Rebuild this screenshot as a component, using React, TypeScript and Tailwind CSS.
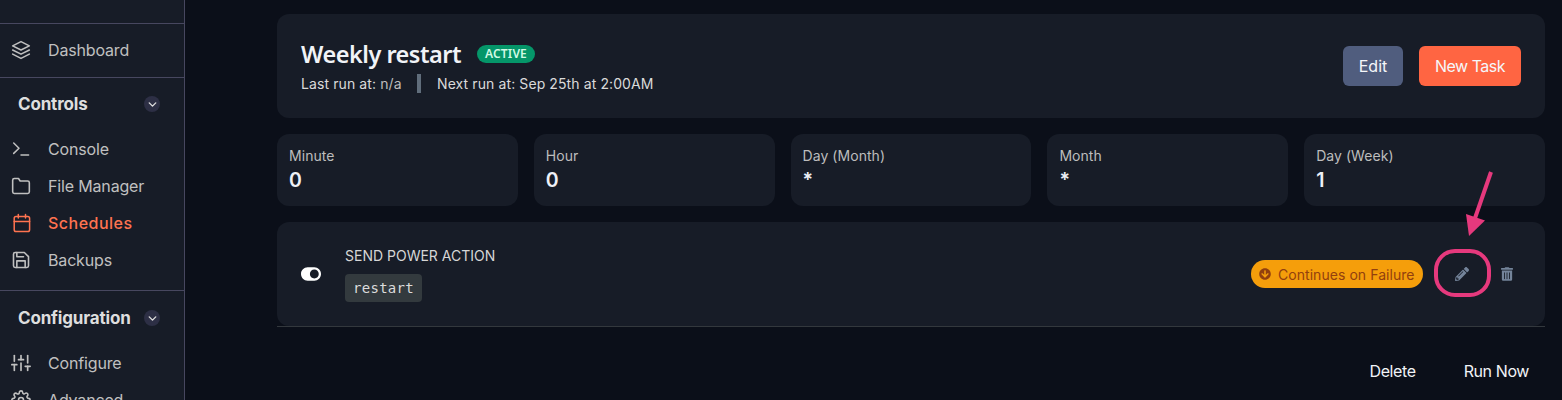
import type { ReactNode } from 'react';
import { FiLayers, FiFolder, FiSave, FiSettings, FiSliders, FiChevronDown } from 'react-icons/fi';
import { FaToggleOn, FaPencilAlt, FaTrashAlt, FaArrowCircleDown } from 'react-icons/fa';

function TerminalIcon() {
  return (
    <svg width="20" height="20" viewBox="0 0 20 20" fill="none" stroke="currentColor" strokeWidth="1.5" strokeLinecap="round" strokeLinejoin="round">
      <path d="M2.7 4L8 9.2L2.7 14.4M10 16h7.6" />
    </svg>
  );
}

function CalendarIcon() {
  return (
    <svg width="20" height="20" viewBox="0 0 20 20" fill="none" stroke="currentColor" strokeWidth="1.5" strokeLinecap="round" strokeLinejoin="round">
      <rect x="3.2" y="3.5" width="15.4" height="15" rx="1.8" />
      <path d="M3.2 8.4h15.4M7.3 1.5v3.6M14.5 1.5v3.6" />
    </svg>
  );
}

function NavItem({ icon, label, active }: { icon: ReactNode; label: string; active?: boolean }) {
  return (
    <div className={active ? 'flex h-[37px] items-center pl-[11px] text-[#ff7350]' : 'flex h-[37px] items-center pl-[11px] text-[#c0c0c0]'}>
      <span className="w-[37px] text-[20px]">{icon}</span>
      <span className={active ? 'text-[16px] font-medium leading-6 tracking-[0.03em]' : 'text-[16px] leading-6 tracking-[-0.01em]'}>{label}</span>
    </div>
  );
}

function Heading({ label }: { label: string }) {
  return (
    <div className="flex h-[52px] items-center justify-between pl-[18px] pr-[24px] text-[17px] font-bold tracking-[-0.01em] text-[#dedede]">
      <span className="pt-px">{label}</span>
      <span className="flex size-4 items-center justify-center rounded-full bg-[#2d2f45] text-[13px]"><FiChevronDown strokeWidth={2.6} /></span>
    </div>
  );
}

const cells = [['Minute', '0'], ['Hour', '0'], ['Day (Month)', '*'], ['Month', '*'], ['Day (Week)', '1']];

export default function App() {
  return (
    <div className="relative flex h-[400px] w-[1562px] overflow-hidden bg-[#0b0f19] font-['Inter',sans-serif]">
      <aside className="flex w-[185px] shrink-0 flex-col border-r border-[#47475f] bg-[#171c27]">
        <div className="h-[24px] shrink-0 border-b border-[#47475f]" />
        <div className="h-[54px] shrink-0 border-b border-[#47475f] pt-[7px]">
          <NavItem icon={<FiLayers strokeWidth={1.9} />} label="Dashboard" />
        </div>
        <div className="h-[213px] shrink-0 border-b border-[#47475f]">
          <Heading label="Controls" />
          <NavItem icon={<TerminalIcon />} label="Console" />
          <NavItem icon={<FiFolder strokeWidth={1.9} />} label="File Manager" />
          <NavItem icon={<CalendarIcon />} label="Schedules" active />
          <NavItem icon={<FiSave strokeWidth={1.9} />} label="Backups" />
        </div>
        <div className="shrink-0 pt-px">
          <Heading label="Configuration" />
          <NavItem icon={<FiSliders strokeWidth={2} />} label="Configure" />
          <NavItem icon={<FiSettings strokeWidth={1.9} />} label="Advanced" />
        </div>
      </aside>
      <main className="flex flex-1 flex-col gap-4 pl-[92px] pr-[17px] pt-[14px]">
        <section className="flex h-[104px] shrink-0 items-center justify-between rounded-xl bg-[#171c27] px-6">
          <div className="pt-px">
            <div className="flex h-8 items-center">
              <h1 className="w-[160px] whitespace-nowrap font-['Noto_Sans',sans-serif] text-[23.5px] font-semibold tracking-[-0.5px] text-[#f1f3f7]">Weekly restart</h1>
              <span className="mb-0.5 ml-4 flex h-[18px] w-[58px] items-center justify-center rounded-full bg-[#059669] font-['Noto_Sans',sans-serif] text-[12px] font-semibold tracking-[0.15px] text-[#d1fae5]">ACTIVE</span>
            </div>
            <div className="flex h-[24px] items-center pt-0.5 text-[14px] tracking-[0.1px] text-[#dadada]">
              <span className="w-[100px] whitespace-nowrap">Last run at: <span className="text-[#bdbdbd]">n/a</span></span>
              <span className="ml-4 h-[19px] w-1 bg-[#606d7b]" />
              <span className="ml-4">Next run at: Sep 25th at 2:00AM</span>
            </div>
          </div>
          <div className="flex gap-4 text-[16px] text-[#f5f7fa]">
            <button className="h-10 w-[60px] rounded-md bg-[#505d7e]">Edit</button>
            <button className="h-10 w-[102px] rounded-md bg-[#ff6542] tracking-[-0.5px]">New Task</button>
          </div>
        </section>
        <section className="grid h-[72px] shrink-0 grid-cols-5 gap-4">
          {cells.map(([label, value]) => (
            <div key={label} className="rounded-xl bg-[#171c27] px-3 pt-3">
              <p className="text-[14px] leading-5 tracking-[0.05px] text-[#bdbdbd]">{label}</p>
              <p className="text-[19.5px] font-semibold leading-7 text-[#eef0f6]">{value}</p>
            </div>
          ))}
        </section>
        <section className="h-[105px] shrink-0 border-b border-[#33383d]">
          <div className="flex h-[104px] items-center rounded-xl bg-[#171c27] pl-6 pr-8">
            <FaToggleOn className="w-5 text-[20px] text-white" />
            <div className="ml-6 flex-1">
              <p className="text-[14px] leading-5 text-[#d6d6d6]">SEND POWER ACTION</p>
              <p className="mt-2 flex h-7 w-[77px] items-center justify-center rounded-sm bg-[#333a3e] font-['DejaVu_Sans_Mono',monospace] text-[14px] tracking-[0.25px] text-[#dcdcdc]">restart</p>
            </div>
            <span className="flex h-7 w-[172px] items-center whitespace-nowrap rounded-full bg-[#f59e0b] pl-2 text-[14px] tracking-[0.05px] text-[#92400e]">
              <FaArrowCircleDown className="mr-[7px] text-[12px]" />Continues on Failure
            </span>
            <FaPencilAlt className="ml-8 text-[14px] text-[#74849a]" />
            <FaTrashAlt className="ml-8 w-3 text-[14px] text-[#74849a]" />
          </div>
        </section>
        <div className="flex justify-end gap-12 pr-4 pt-4 text-[16px] tracking-[-0.4px] text-[#f1f3f7]">
          <span>Delete</span><span>Run Now</span>
        </div>
      </main>
      <svg className="absolute left-[1430px] top-[165px]" width="66" height="136" viewBox="1430 165 66 136" fill="none">
        <rect x="1436" y="251" width="53" height="44" rx="19" stroke="#e6397d" strokeWidth="4" />
        <path d="M1491 172L1474 221" stroke="#e6397d" strokeWidth="4" />
        <path d="M1466 214L1485 220.5L1469 236Z" fill="#e6397d" />
      </svg>
    </div>
  );
}
